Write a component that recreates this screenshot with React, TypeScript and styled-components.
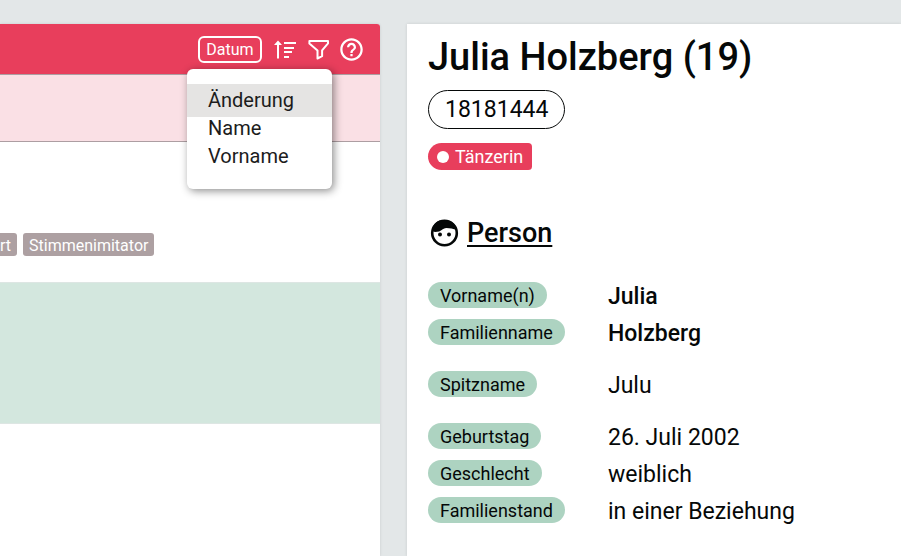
import React from "react";
import styled, { createGlobalStyle, css } from "styled-components";
import { MdHelpOutline } from "react-icons/md";

const GlobalStyle = createGlobalStyle`
  *, *::before, *::after { box-sizing: border-box; }
  body {
    margin: 0;
    background: #e3e7e8;
    color: #050808;
    font-family: Roboto, sans-serif;
    overflow: hidden;
  }
  button { font-family: inherit; cursor: pointer; }
`;

const Page = styled.div`
  display: grid;
  grid-template-columns: 10fr 13fr;
  column-gap: 27px;
  min-height: 100vh;
  padding-top: 24px;
`;

const Panel = styled.section`
  min-width: 0;
  background: #fff;
  box-shadow: 0 0 3px rgba(0, 0, 0, 0.12);
`;

const ListPanel = styled(Panel)`
  border-top-right-radius: 3px;
`;

const Toolbar = styled.header`
  position: relative;
  display: flex;
  align-items: center;
  justify-content: flex-end;
  gap: 8px;
  height: 51px;
  padding-right: 15px;
  border-bottom: 1px solid #ad9ea2;
  border-top-right-radius: 3px;
  background: #e83e5c;
  color: #fff;
`;

const SortButton = styled.button`
  width: 64px;
  height: 27px;
  margin-right: 4px;
  padding: 0;
  border: 2px solid #fff;
  border-radius: 6px;
  background: transparent;
  color: #fff;
  font-size: 16px;
  line-height: 23px;
`;

const IconButton = styled.button`
  display: flex;
  padding: 0;
  border: 0;
  background: transparent;
  color: #fff;
`;

const Menu = styled.div`
  position: absolute;
  z-index: 1;
  top: 45px;
  right: 48px;
  width: 145px;
  padding: 15px 0 16px;
  border-radius: 6px;
  background: #fff;
  box-shadow: 2px 2px 8px rgba(0, 0, 0, 0.45);
`;

const MenuItem = styled.button<{ $active?: boolean }>`
  display: block;
  width: 100%;
  height: 33px;
  padding: 0 21px;
  border: 0;
  background: ${(p) => (p.$active ? "#e5e4e3" : "transparent")};
  color: #1c1c1c;
  font-size: 20px;
  line-height: 33px;
  text-align: left;
  & + & { margin-top: -5px; }
`;

const tones = { pink: "#fae0e5", white: "#fff", green: "#d3e7de" };

const ListRow = styled.div<{ $tone: keyof typeof tones; $height: number }>`
  display: flex;
  align-items: flex-end;
  gap: 6px;
  height: ${(p) => p.$height}px;
  padding-bottom: 26px;
  background: ${(p) => tones[p.$tone]};
  ${(p) => p.$tone === "pink" && css`border-bottom: 1px solid #ad9ea2;`}
  ${(p) => p.$tone === "green" && css`border: solid #dde6e3; border-width: 1px 0;`}
`;

const Tag = styled.span<{ $cut?: boolean }>`
  height: 23px;
  padding: 0 6px 0 ${(p) => (p.$cut ? 0 : 6)}px;
  border-radius: ${(p) => (p.$cut ? "0 3px 3px 0" : "3px")};
  background: #ada0a2;
  color: #fff;
  font-size: 16px;
  line-height: 25px;
`;

const Detail = styled(Panel)`
  display: flex;
  flex-direction: column;
  align-items: flex-start;
  padding: 8px 21px;
`;

const Title = styled.h1`
  margin: 0;
  font-size: 38px;
  font-weight: 500;
  line-height: 50px;
`;

const NumberPill = styled.div`
  margin-top: 8px;
  padding: 0 16px;
  border: 1px solid #050808;
  border-radius: 20px;
  font-size: 23px;
  line-height: 37px;
`;

const RoleBadge = styled.div`
  display: flex;
  align-items: center;
  gap: 6px;
  height: 27px;
  margin-top: 14px;
  padding: 0 9px;
  border-radius: 14px 4px 4px 14px;
  background: #e83e5c;
  color: #fff;
  font-size: 18px;
  line-height: 27px;
  &::before {
    content: "";
    width: 12px;
    height: 12px;
    border-radius: 50%;
    background: #fff;
  }
`;

const SectionHeading = styled.h2`
  display: flex;
  align-items: center;
  gap: 7px;
  margin: 47px 0 0;
  font-size: 27px;
  font-weight: 500;
  line-height: 32px;
`;

const SectionLink = styled.a`
  color: inherit;
  text-decoration: underline;
  text-decoration-thickness: 2px;
  text-underline-offset: 3px;
`;

const Facts = styled.dl`
  margin: 28px 0 0;
`;

const Fact = styled.div<{ $spaced?: boolean }>`
  display: grid;
  grid-template-columns: 180px auto;
  align-items: start;
  height: 37px;
  margin-bottom: ${(p) => (p.$spaced ? 15 : 0)}px;
`;

const Label = styled.dt`
  justify-self: start;
  height: 26px;
  margin-top: 5px;
  padding: 0 12px;
  border-radius: 13px;
  background: #add3c1;
  font-size: 18px;
  line-height: 27px;
`;

const Value = styled.dd<{ $strong?: boolean }>`
  margin: 0;
  font-size: 23px;
  font-weight: ${(p) => (p.$strong ? 500 : 400)};
  line-height: 40px;
`;

const SortIcon = () => (
  <svg width="24" height="24" viewBox="0 0 24 24" fill="currentColor" aria-hidden="true">
    <path d="M4 3.5 8 8H5V21.5H3V8H0Z" />
    <path d="M10 5h12v2H10zM10 10h10v2H10zM10 14h8v2h-8zM10 19h5v2h-5z" />
  </svg>
);

const FilterIcon = () => (
  <svg width="24" height="24" viewBox="0 0 24 24" fill="none" stroke="currentColor" strokeWidth="2" strokeLinejoin="round" aria-hidden="true">
    <path d="M3.4 3.9h18.6V6.4l-5.9 7v5.8l-4.6 2.3V13.4L3.4 6.4Z" />
  </svg>
);

const FaceIcon = () => (
  <svg width="32" height="32" viewBox="0 0 32 32" fill="currentColor" aria-hidden="true">
    <circle cx="16.5" cy="16" r="12.3" fill="none" stroke="currentColor" strokeWidth="2.6" />
    <path d="M4 14C5 6 10 3 16.5 3S28 7 29 13c-4-1.3-7-2-10.500-2-4.500 0-4.500 4-11.500 4Z" />
    <circle cx="12" cy="17.500" r="2" />
    <circle cx="21" cy="17.500" r="2" />
  </svg>
);

const sortOptions = ["Änderung", "Name", "Vorname"];

const facts = [
  { label: "Vorname(n)", value: "Julia", strong: true },
  { label: "Familienname", value: "Holzberg", strong: true, spaced: true },
  { label: "Spitzname", value: "Julu", spaced: true },
  { label: "Geburtstag", value: "26. Juli 2002" },
  { label: "Geschlecht", value: "weiblich" },
  { label: "Familienstand", value: "in einer Beziehung" },
];

export default function App() {
  return (
    <>
      <GlobalStyle />
      <Page>
        <ListPanel>
          <Toolbar>
            <SortButton aria-haspopup="menu" aria-expanded="true">Datum</SortButton>
            <IconButton aria-label="Sortierung"><SortIcon /></IconButton>
            <IconButton aria-label="Filter"><FilterIcon /></IconButton>
            <IconButton aria-label="Hilfe"><MdHelpOutline size={27} /></IconButton>
            <Menu role="menu">
              {sortOptions.map((option, i) => (
                <MenuItem key={option} role="menuitem" $active={i === 0}>{option}</MenuItem>
              ))}
            </Menu>
          </Toolbar>
          <ListRow $tone="pink" $height={67} />
          <ListRow $tone="white" $height={140}>
            <Tag $cut>rt</Tag>
            <Tag>Stimmenimitator</Tag>
          </ListRow>
          <ListRow $tone="green" $height={142} />
        </ListPanel>
        <Detail>
          <Title>Julia Holzberg (19)</Title>
          <NumberPill>18181444</NumberPill>
          <RoleBadge>Tänzerin</RoleBadge>
          <SectionHeading>
            <FaceIcon />
            <SectionLink href="#person">Person</SectionLink>
          </SectionHeading>
          <Facts id="person">
            {facts.map((fact) => (
              <Fact key={fact.label} $spaced={fact.spaced}>
                <Label>{fact.label}</Label>
                <Value $strong={fact.strong}>{fact.value}</Value>
              </Fact>
            ))}
          </Facts>
        </Detail>
      </Page>
    </>
  );
}
